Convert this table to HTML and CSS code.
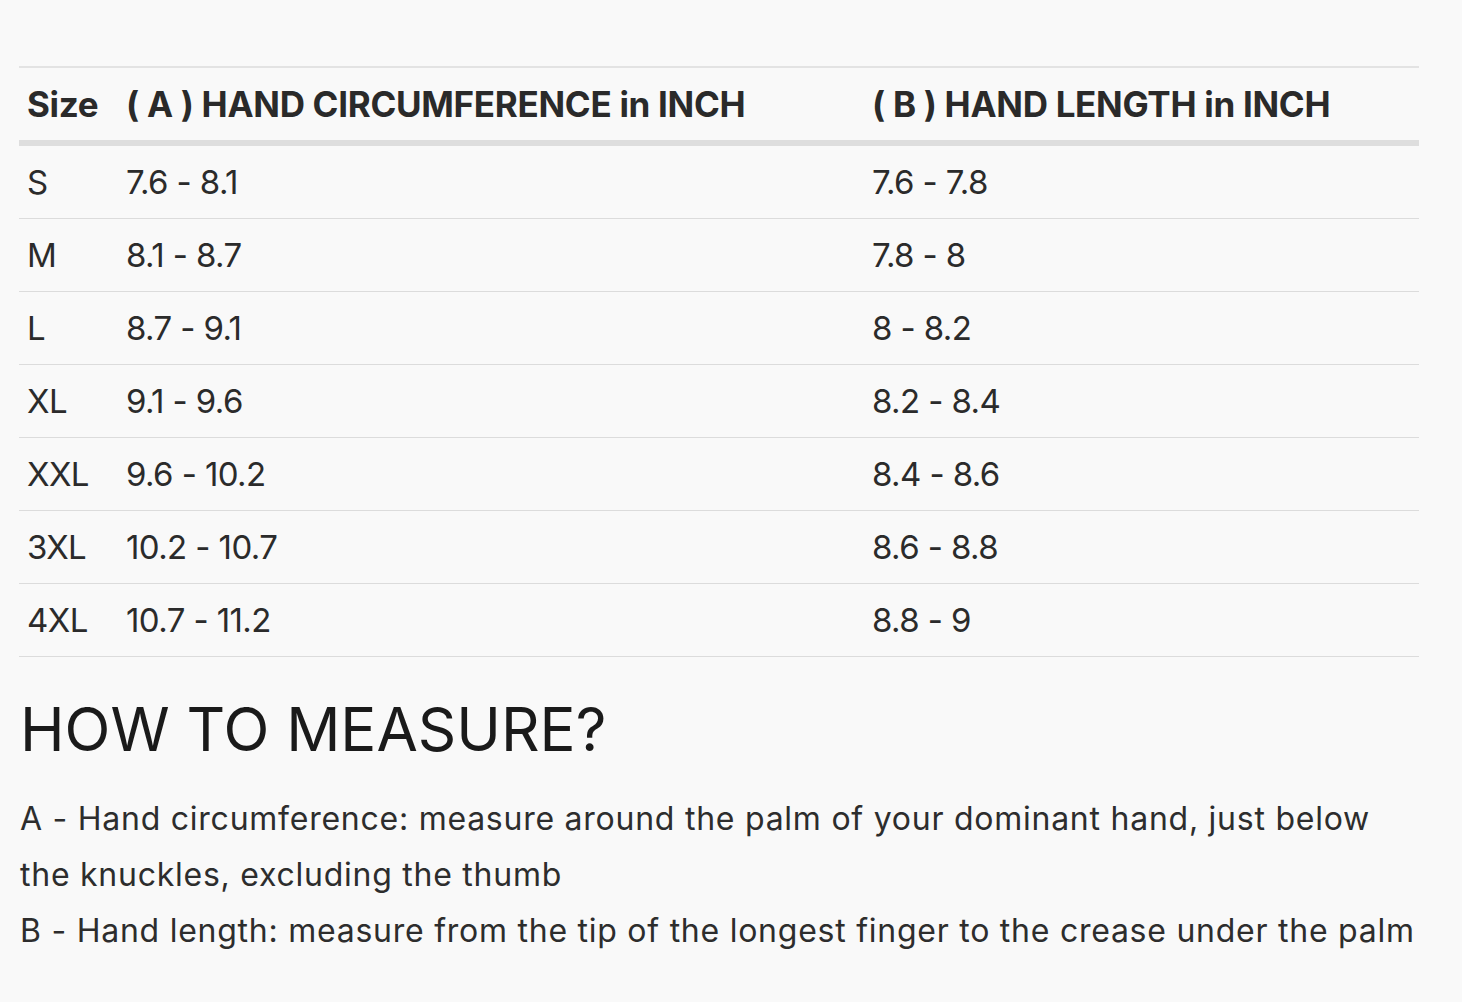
FILE: index.html
```html
<!DOCTYPE html>
<html lang="en">
<head>
<meta charset="utf-8">
<link rel="stylesheet" href="styles.css">
</head>
<body>
<div class="page">
  <table class="size-table">
    <colgroup>
      <col class="c1"><col class="c2"><col class="c3">
    </colgroup>
    <thead>
      <tr><th>Size</th><th>( A ) HAND CIRCUMFERENCE in INCH</th><th>( B ) HAND LENGTH in INCH</th></tr>
    </thead>
    <tbody>
      <tr><td>S</td><td>7.6 - 8.1</td><td>7.6 - 7.8</td></tr>
      <tr><td>M</td><td>8.1 - 8.7</td><td>7.8 - 8</td></tr>
      <tr><td>L</td><td>8.7 - 9.1</td><td>8 - 8.2</td></tr>
      <tr><td>XL</td><td>9.1 - 9.6</td><td>8.2 - 8.4</td></tr>
      <tr><td>XXL</td><td>9.6 - 10.2</td><td>8.4 - 8.6</td></tr>
      <tr><td>3XL</td><td>10.2 - 10.7</td><td>8.6 - 8.8</td></tr>
      <tr><td>4XL</td><td>10.7 - 11.2</td><td>8.8 - 9</td></tr>
    </tbody>
  </table>
  <h2 class="measure-title">HOW TO MEASURE?</h2>
  <p class="measure-text">A - Hand circumference: measure around the palm of your dominant hand, just below the knuckles, excluding the thumb<br>B - Hand length: measure from the tip of the longest finger to the crease under the palm</p>
</div>
</body>
</html>
```

FILE: styles.css
```css
html, body {
  margin: 0;
  padding: 0;
  background: #f9f9f9;
}
body {
  font-family: Inter, "Noto Sans", sans-serif;
  color: #2b2b2b;
}
.page {
  padding: 66px 43px 0 19px;
}
.size-table {
  width: 1400px;
  border-collapse: collapse;
  table-layout: fixed;
}
.c1 { width: 99px; }
.c2 { width: 746px; }
.c3 { width: 555px; }
.size-table th {
  text-align: left;
  font-weight: 700;
  font-size: 35px;
  letter-spacing: -0.3px;
  color: #2a2a2a;
  height: 72px;
  padding: 0 8px;
  border-top: 2px solid #e3e3e3;
  border-bottom: 6px solid #dedede;
  white-space: nowrap;
}
.size-table td {
  font-size: 33px;
  letter-spacing: -0.6px;
  font-weight: 400;
  height: 72px;
  padding: 0 8px;
  border-bottom: 1px solid #dcdcdc;
}
.measure-title {
  margin: 36px 0 0 1px;
  font-size: 60px;
  font-weight: 400;
  letter-spacing: 0;
  line-height: 72px;
  color: #1a1a1a;
}
.measure-text {
  margin: 26px -6px 0 1px;
  font-size: 32px;
  line-height: 56px;
  letter-spacing: 0.75px;
  color: #2d2d2d;
}
```
